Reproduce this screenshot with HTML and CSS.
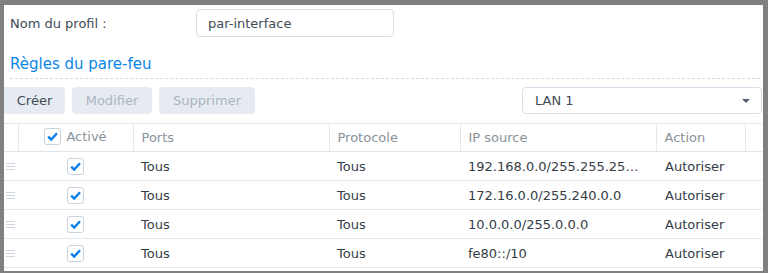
FILE: index.html
```html
<!DOCTYPE html>
<html lang="fr">
<head>
  <meta charset="UTF-8">
  <meta name="viewport" content="width=device-width, initial-scale=1.0">
  <title>Profil de pare-feu</title>
  <link rel="stylesheet" href="styles.css">
</head>
<body>
  <div class="panel">
    <div class="form-row">
      <label class="form-label" for="profileName">Nom du profil :</label>
      <input type="text" id="profileName" class="text-field" value="par-interface">
    </div>

    <h2 class="section-title">Règles du pare-feu</h2>

    <div class="toolbar">
      <div class="button-group">
        <button class="btn btn-first">Créer</button>
        <button class="btn" disabled>Modifier</button>
        <button class="btn" disabled>Supprimer</button>
      </div>
      <div class="select">
        <span>LAN 1</span>
        <svg class="select-arrow" width="8" height="4" viewBox="0 0 8 4"><path d="M0 0 H8 L4 4 Z" fill="#555f6b"/></svg>
      </div>
    </div>

    <table class="rules">
      <colgroup>
        <col class="col-handle">
        <col class="col-enabled">
        <col class="col-ports">
        <col class="col-proto">
        <col class="col-ip">
        <col class="col-action">
        <col>
      </colgroup>
      <thead>
        <tr>
          <th></th>
          <th class="center">
            <span class="check-label">
              <span class="checkbox"><svg width="15" height="15" viewBox="0 0 15 15"><path d="M3.2 7.6 L6.2 10.6 L12 4.3" fill="none" stroke="#0a7fe8" stroke-width="2.4"/></svg></span>
              Activé
            </span>
          </th>
          <th>Ports</th>
          <th>Protocole</th>
          <th>IP source</th>
          <th>Action</th>
          <th></th>
        </tr>
      </thead>
      <tbody id="rows"></tbody>
    </table>
  </div>

  <script>
    // Rules shown in the table
    const rules = [
      { ports: "Tous", proto: "Tous", ip: "192.168.0.0/255.255.255.0", action: "Autoriser" },
      { ports: "Tous", proto: "Tous", ip: "172.16.0.0/255.240.0.0", action: "Autoriser" },
      { ports: "Tous", proto: "Tous", ip: "10.0.0.0/255.0.0.0", action: "Autoriser" },
      { ports: "Tous", proto: "Tous", ip: "fe80::/10", action: "Autoriser" }
    ];

    const handle = '<svg width="9" height="7" viewBox="0 0 9 7"><path d="M0 0.5 H9 M0 3.5 H9 M0 6.5 H9" stroke="#cfd6df" stroke-width="1"/></svg>';
    const check = '<span class="checkbox"><svg width="15" height="15" viewBox="0 0 15 15"><path d="M3.2 7.6 L6.2 10.6 L12 4.3" fill="none" stroke="#0a7fe8" stroke-width="2.4"/></svg></span>';

    document.getElementById('rows').innerHTML = rules.map(r => `
      <tr>
        <td class="handle">${handle}</td>
        <td class="center">${check}</td>
        <td>${r.ports}</td>
        <td>${r.proto}</td>
        <td class="ellipsis">${r.ip}</td>
        <td>${r.action}</td>
        <td></td>
      </tr>`).join("");
  </script>
</body>
</html>
```

FILE: styles.css
```css
body {
  font-family: "DejaVu Sans", Verdana, sans-serif;
  font-size: 13px;
  color: #414b55;
  background-color: #808080;
  margin: 0;
  padding: 5px 5px 6px 4px;
}
.panel {
  background: white;
  height: 262px;
  padding: 4px 0 0 6px;
  overflow: hidden;
}
.form-row {
  display: flex;
  align-items: center;
  height: 28px;
}
.form-label {
  width: 186px;
}
.text-field {
  box-sizing: border-box;
  width: 198px;
  height: 28px;
  padding: 0 11px;
  border: 1px solid #d6dfe9;
  border-radius: 4px;
  font-family: inherit;
  font-size: 13px;
  color: #414b55;
  outline: none;
}
.section-title {
  margin: 17px 3px 0 0;
  padding-bottom: 4px;
  font-size: 15px;
  font-weight: normal;
  line-height: 20px;
  color: #0a86e6;
  border-bottom: 1px dashed #d3dae3;
}
.toolbar {
  display: flex;
  justify-content: space-between;
  margin: 8px 0 0 -6px;
  padding-right: 1px;
}
.button-group {
  display: flex;
  gap: 7px;
}
.btn {
  height: 27px;
  padding: 0 11px;
  border: none;
  border-radius: 4px;
  background-color: #e6ebf2;
  font-family: inherit;
  font-size: 13px;
  color: #414b55;
}
.btn-first {
  width: 61px;
  border-top-left-radius: 0;
  border-bottom-left-radius: 0;
}
.btn[disabled] {
  color: #adb5bf;
}
.btn:nth-child(2) {
  width: 80px;
}
.btn:nth-child(3) {
  width: 96px;
}
.select {
  box-sizing: border-box;
  width: 240px;
  height: 27px;
  display: flex;
  align-items: center;
  justify-content: space-between;
  padding: 0 11px 0 12px;
  border: 1px solid #d6dfe9;
  border-radius: 4px;
}
.rules {
  margin: 9px 0 0 -6px;
  width: 758px;
  table-layout: fixed;
  border-collapse: collapse;
}
.col-handle { width: 14px; }
.col-enabled { width: 115px; }
.col-ports { width: 196px; }
.col-proto { width: 131px; }
.col-ip { width: 196px; }
.col-action { width: 89px; }
.rules th {
  height: 27px;
  padding: 0 8px;
  font-weight: normal;
  text-align: left;
  color: #8a929b;
  border-top: 1px solid #dfe5ec;
  border-bottom: 1px solid #dfe5ec;
  border-right: 1px solid #e3e8ee;
}
.rules th:last-child {
  border-right: none;
}
.rules td {
  height: 28px;
  padding: 0 8px;
  color: #353d47;
  border-bottom: 1px solid #e3e8ee;
}
.rules td:nth-child(6) {
  padding-left: 9px;
}
.rules .center {
  text-align: center;
  padding: 0;
}
.rules .handle {
  padding: 0 0 0 2px;
  line-height: 0;
}
.rules .ellipsis {
  padding-right: 16px;
  white-space: nowrap;
  overflow: hidden;
  text-overflow: ellipsis;
}
.check-label {
  display: inline-flex;
  align-items: center;
  gap: 5px;
}
.checkbox {
  box-sizing: border-box;
  width: 17px;
  height: 17px;
  display: inline-flex;
  align-items: center;
  justify-content: center;
  vertical-align: middle;
  border: 1px solid #c9d3de;
  border-radius: 3px;
  background: white;
}
```
